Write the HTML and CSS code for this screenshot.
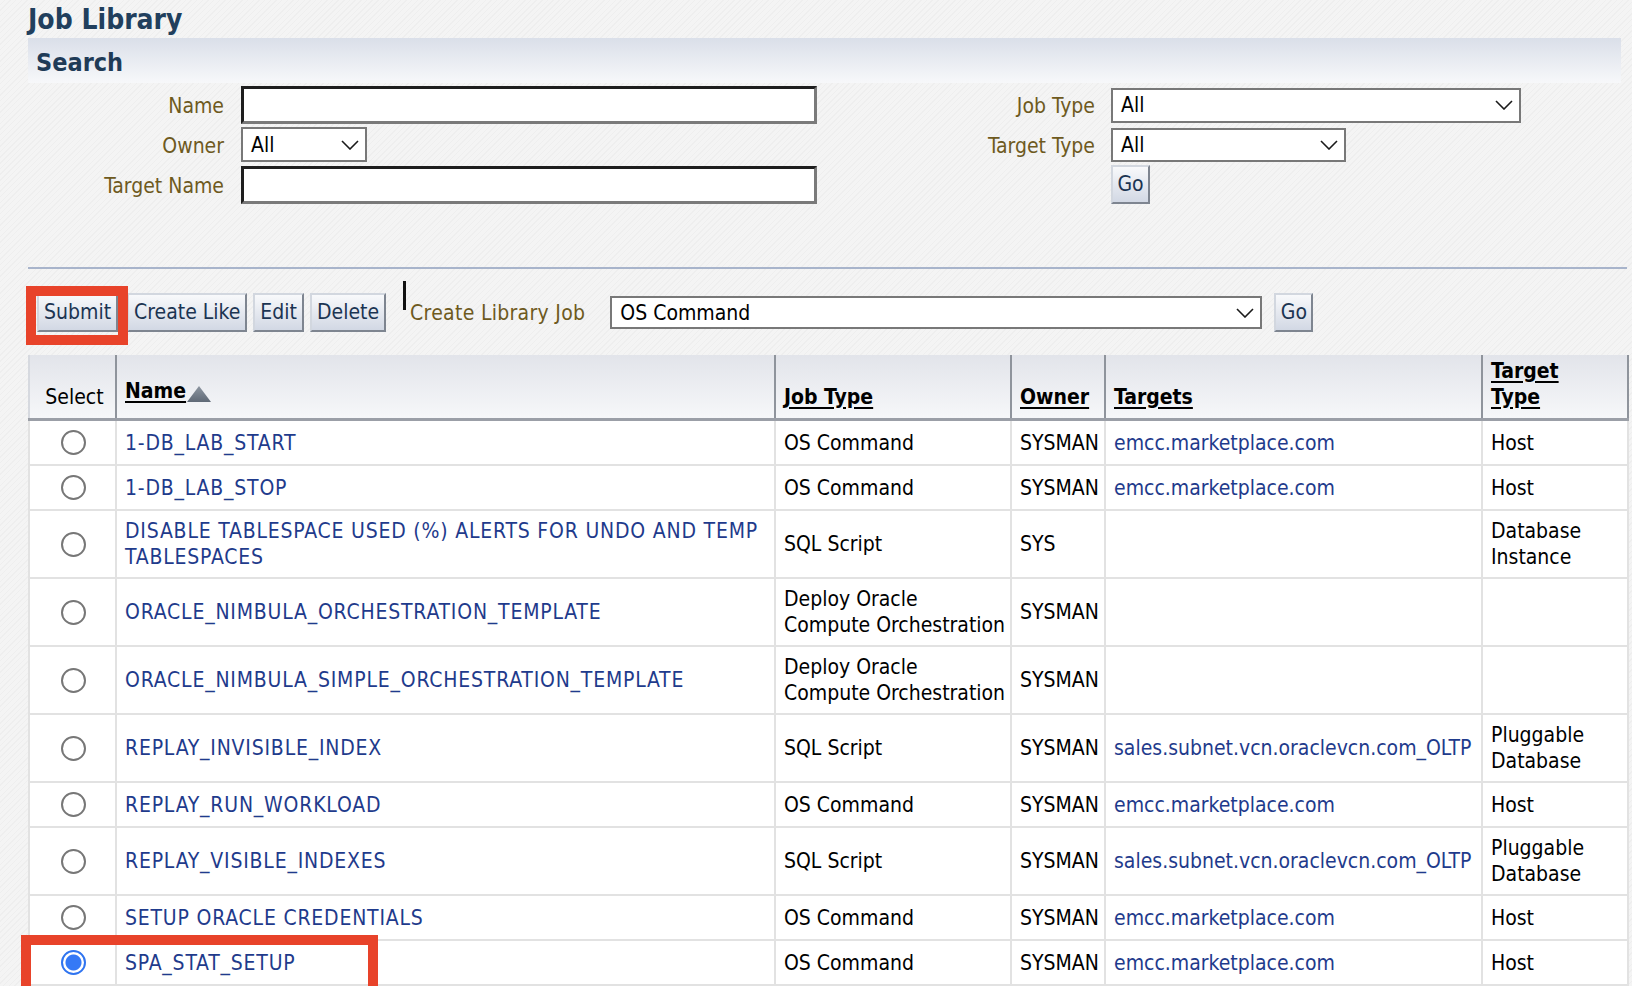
FILE: index.html
```html
<!DOCTYPE html>
<html lang="en">
<head>
<meta charset="utf-8">
<title>Job Library</title>
<link rel="stylesheet" href="styles.css">
</head>
<body>
<div class="page">
  <h1 class="title">Job Library</h1>
  <div class="search-band"><h2>Search</h2></div>

  <div class="search-form">
    <label class="lbl">Name</label>
    <div class="ctl"><input class="text-input" type="text"></div>
    <label class="lbl lbl-r">Job Type</label>
    <div class="ctl">
      <div class="select sel-jobtype"><span>All</span><svg viewBox="0 0 18 10" width="18" height="10"><polyline points="1,1 9,9 17,1" fill="none" stroke="#1a1a1a" stroke-width="1.6"/></svg></div>
    </div>

    <label class="lbl">Owner</label>
    <div class="ctl">
      <div class="select sel-owner"><span>All</span><svg viewBox="0 0 18 10" width="18" height="10"><polyline points="1,1 9,9 17,1" fill="none" stroke="#1a1a1a" stroke-width="1.6"/></svg></div>
    </div>
    <label class="lbl lbl-r">Target Type</label>
    <div class="ctl">
      <div class="select sel-ttype"><span>All</span><svg viewBox="0 0 18 10" width="18" height="10"><polyline points="1,1 9,9 17,1" fill="none" stroke="#1a1a1a" stroke-width="1.6"/></svg></div>
    </div>

    <label class="lbl">Target Name</label>
    <div class="ctl"><input class="text-input" type="text"></div>
    <div class="empty"></div>
    <div class="ctl"><button class="btn btn-go" type="button">Go</button></div>
  </div>

  <div class="separator"></div>

  <div class="toolbar">
    <span class="annot"><button class="btn" type="button">Submit</button></span>
    <button class="btn ml-9" type="button">Create Like</button>
    <button class="btn ml-6" type="button">Edit</button>
    <button class="btn ml-6" type="button">Delete</button>
    <span class="cursor-bar"></span>
    <span class="lbl-inline">Create Library Job</span>
    <div class="select sel-cmd"><span>OS Command</span><svg viewBox="0 0 18 10" width="18" height="10"><polyline points="1,1 9,9 17,1" fill="none" stroke="#1a1a1a" stroke-width="1.6"/></svg></div>
    <button class="btn btn-go ml-12" type="button">Go</button>
  </div>

  <table class="jobs">
    <colgroup>
      <col class="c-sel"><col class="c-name"><col class="c-type"><col class="c-owner"><col class="c-targets"><col class="c-ttype">
    </colgroup>
    <thead>
      <tr>
        <th class="th-sel">Select</th>
        <th><a class="hlink">Name</a><svg class="sort-ico" viewBox="0 0 26 30" width="26" height="30"><defs><linearGradient id="sortg" x1="0" y1="0" x2="0" y2="1"><stop offset="0" stop-color="#8e97a2"/><stop offset="1" stop-color="#5f6976"/></linearGradient></defs><polygon points="1,22 13,6 25,22" fill="url(#sortg)"/></svg></th>
        <th><a class="hlink">Job Type</a></th>
        <th><a class="hlink">Owner</a></th>
        <th><a class="hlink">Targets</a></th>
        <th><a class="hlink">Target<br>Type</a></th>
      </tr>
    </thead>
    <tbody>
      <tr>
        <td class="sel"><span class="radio"></span></td>
        <td><a class="link name-link">1-DB_LAB_START</a></td>
        <td>OS Command</td>
        <td>SYSMAN</td>
        <td><a class="link">emcc.marketplace.com</a></td>
        <td>Host</td>
      </tr>
      <tr>
        <td class="sel"><span class="radio"></span></td>
        <td><a class="link name-link">1-DB_LAB_STOP</a></td>
        <td>OS Command</td>
        <td>SYSMAN</td>
        <td><a class="link">emcc.marketplace.com</a></td>
        <td>Host</td>
      </tr>
      <tr>
        <td class="sel"><span class="radio"></span></td>
        <td><a class="link name-link">DISABLE TABLESPACE USED (%) ALERTS FOR UNDO AND TEMP<br>TABLESPACES</a></td>
        <td>SQL Script</td>
        <td>SYS</td>
        <td></td>
        <td>Database<br>Instance</td>
      </tr>
      <tr>
        <td class="sel"><span class="radio"></span></td>
        <td><a class="link name-link">ORACLE_NIMBULA_ORCHESTRATION_TEMPLATE</a></td>
        <td>Deploy Oracle<br>Compute Orchestration</td>
        <td>SYSMAN</td>
        <td></td>
        <td></td>
      </tr>
      <tr>
        <td class="sel"><span class="radio"></span></td>
        <td><a class="link name-link">ORACLE_NIMBULA_SIMPLE_ORCHESTRATION_TEMPLATE</a></td>
        <td>Deploy Oracle<br>Compute Orchestration</td>
        <td>SYSMAN</td>
        <td></td>
        <td></td>
      </tr>
      <tr>
        <td class="sel"><span class="radio"></span></td>
        <td><a class="link name-link">REPLAY_INVISIBLE_INDEX</a></td>
        <td>SQL Script</td>
        <td>SYSMAN</td>
        <td><a class="link">sales.subnet.vcn.oraclevcn.com_OLTP</a></td>
        <td>Pluggable<br>Database</td>
      </tr>
      <tr>
        <td class="sel"><span class="radio"></span></td>
        <td><a class="link name-link">REPLAY_RUN_WORKLOAD</a></td>
        <td>OS Command</td>
        <td>SYSMAN</td>
        <td><a class="link">emcc.marketplace.com</a></td>
        <td>Host</td>
      </tr>
      <tr>
        <td class="sel"><span class="radio"></span></td>
        <td><a class="link name-link">REPLAY_VISIBLE_INDEXES</a></td>
        <td>SQL Script</td>
        <td>SYSMAN</td>
        <td><a class="link">sales.subnet.vcn.oraclevcn.com_OLTP</a></td>
        <td>Pluggable<br>Database</td>
      </tr>
      <tr>
        <td class="sel"><span class="radio"></span></td>
        <td><a class="link name-link">SETUP ORACLE CREDENTIALS</a></td>
        <td>OS Command</td>
        <td>SYSMAN</td>
        <td><a class="link">emcc.marketplace.com</a></td>
        <td>Host</td>
      </tr>
      <tr>
        <td class="sel sel-annot"><span class="radio checked"></span><span class="annot-row"></span></td>
        <td><a class="link name-link">SPA_STAT_SETUP</a></td>
        <td>OS Command</td>
        <td>SYSMAN</td>
        <td><a class="link">emcc.marketplace.com</a></td>
        <td>Host</td>
      </tr>
    </tbody>
  </table>
</div>
</body>
</html>
```

FILE: styles.css
```css
* { box-sizing: border-box; }

html, body { margin: 0; padding: 0; }

body {
  width: 1632px;
  height: 986px;
  overflow: hidden;
  background-color: #f4f4f4;
  background-image: repeating-linear-gradient(135deg, rgba(0,0,0,0) 0 3px, rgba(0,0,0,0.025) 3px 4px);
  font-family: "DejaVu Sans Condensed", "Liberation Sans", sans-serif;
  font-size: 21px;
  line-height: 26px;
  color: #000;
}

.page { padding: 0 5px 0 28px; }

.title {
  margin: 0;
  height: 38px;
  padding-top: 3px;
  font-size: 28px;
  line-height: 34px;
  font-weight: bold;
  color: #213f5d;
}

.search-band {
  width: 1593px;
  height: 45px;
  padding: 5px 0 0 8px;
  background: linear-gradient(#dadfe9, #f7f8fa);
}
.search-band h2 {
  margin: 0;
  font-size: 25px;
  line-height: 40px;
  font-weight: bold;
  color: #1f3b57;
}

.search-form {
  display: grid;
  grid-template-columns: 213px 576px 294px auto;
  row-gap: 3px;
  margin-top: 3px;
  align-items: center;
}
.lbl { text-align: right; padding: 2px 17px 0 0; color: #6e5a1e; }
.lbl-r { padding-right: 16px; }
.ctl { display: flex; align-items: center; }

.text-input {
  display: block;
  width: 576px;
  height: 38px;
  margin: 0;
  padding: 0 6px;
  border-style: solid;
  border-width: 3px;
  border-color: #1e1e1e #7a7a7a #7a7a7a #1e1e1e;
  background: #fff;
  font: inherit;
}

.select {
  display: flex;
  align-items: center;
  justify-content: space-between;
  height: 35px;
  padding: 0 6px 0 8px;
  border: 2px solid #787878;
  background: #fff;
  color: #000;
  white-space: nowrap;
}
.select svg { flex: none; }
.sel-owner { width: 126px; }
.sel-jobtype { width: 410px; }
.sel-ttype { width: 235px; height: 34px; }
.sel-cmd { width: 652px; height: 33px; margin-left: 25px; }

.btn {
  height: 39px;
  margin: 0;
  padding: 0 5px;
  font: inherit;
  line-height: 35px;
  color: #1b3452;
  border: 2px solid;
  border-color: #d2d7df #7e8590 #7e8590 #d2d7df;
  background: linear-gradient(#f8f9fb, #d2d8e4);
  white-space: nowrap;
}
.btn-go { width: 39px; padding: 0; text-align: center; }

.separator {
  height: 2px;
  margin-top: 63px;
  background: #a8b4cb;
}

.toolbar {
  display: flex;
  align-items: center;
  margin-top: 24px;
  padding-left: 9px;
}
.ml-6 { margin-left: 6px; }
.ml-9 { margin-left: 9px; }
.ml-12 { margin-left: 12px; }

.annot { position: relative; display: inline-flex; }
.annot::after {
  content: "";
  position: absolute;
  top: -7px;
  left: -11px;
  right: -10px;
  bottom: -13px;
  border: 10px solid #e8432a;
  pointer-events: none;
}

.cursor-bar {
  align-self: flex-start;
  width: 3px;
  height: 29px;
  margin: -12px 0 0 17px;
  background: #111;
}
.lbl-inline { margin-left: 4px; color: #6e5a1e; white-space: nowrap; letter-spacing: 0.3px; }

.jobs {
  width: 1599px;
  margin-top: 23px;
  border-collapse: collapse;
  table-layout: fixed;
  background: #fff;
}
.c-sel { width: 87px; }
.c-name { width: 659px; }
.c-type { width: 236px; }
.c-owner { width: 94px; }
.c-targets { width: 377px; }
.c-ttype { width: 146px; }

.jobs th {
  padding: 3px 8px 8px;
  text-align: left;
  vertical-align: bottom;
  font-weight: bold;
  white-space: nowrap;
  background: linear-gradient(#e2e4ea, #f6f7f9);
  border-left: 2px solid #8f949c;
  border-right: 2px solid #8f949c;
  border-bottom: 3px solid #9b9fa7;
}
.jobs th.th-sel {
  font-weight: normal;
  text-align: center;
  padding-left: 12px;
  border-left-color: #d6d9df;
}
.hlink {
  color: #000;
  text-decoration: underline;
  text-decoration-thickness: 2px;
  text-underline-offset: 3px;
}
.sort-ico { vertical-align: -12px; }

.jobs td {
  padding: 7px 8px;
  border: 2px solid #e2e2e2;
  vertical-align: middle;
  white-space: nowrap;
}
.jobs td.sel { padding: 7px 0 7px 2px; }
.link { color: #1f3b8c; text-decoration: none; }
.name-link { letter-spacing: 0.8px; }

.radio {
  display: block;
  width: 25px;
  height: 25px;
  margin: 2px auto;
  border: 2px solid #777;
  border-radius: 50%;
  background: #fff;
}
.radio.checked {
  border-color: #2f74f0;
  background: radial-gradient(circle, #3579f6 0 7.5px, #fff 8.5px);
}

.sel-annot { position: relative; }
.annot-row {
  position: absolute;
  left: -9px;
  top: -6px;
  width: 357px;
  height: 62px;
  border: 10px solid #e8432a;
  pointer-events: none;
}
```
